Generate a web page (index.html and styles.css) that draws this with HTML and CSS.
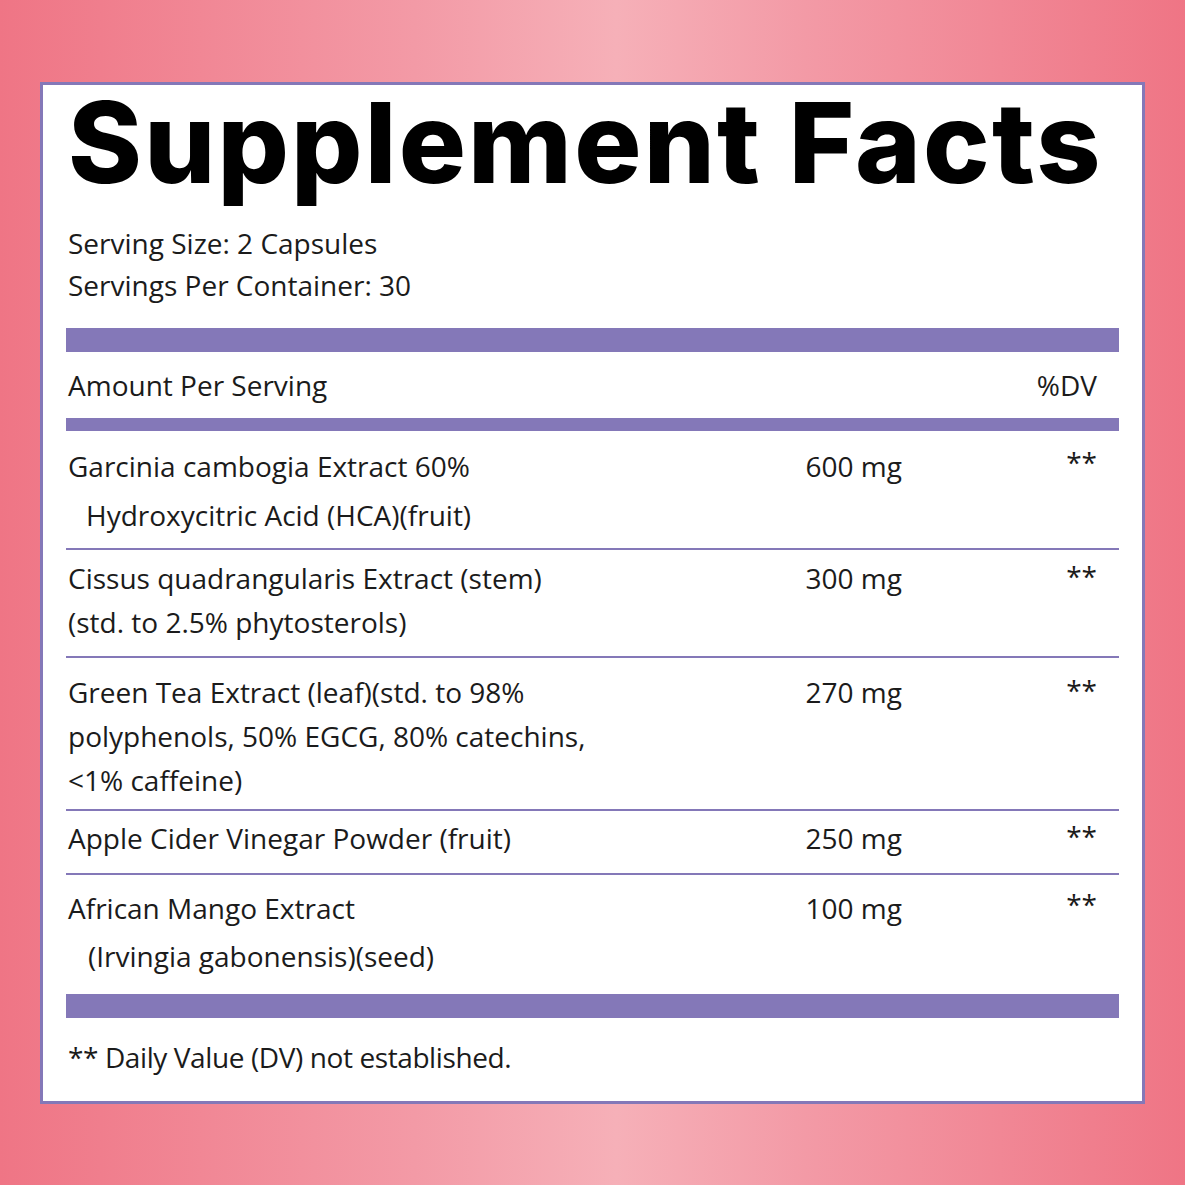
FILE: index.html
```html
<!DOCTYPE html>
<html>
<head>
<meta charset="utf-8">
<link rel="stylesheet" href="styles.css">
</head>
<body>
<div class="card">
  <h1 class="title">Supplement Facts</h1>
  <div class="serving">
    <div>Serving Size: 2 Capsules</div>
    <div>Servings Per Container: 30</div>
  </div>
  <div class="bar thick"></div>
  <div class="head-row">
    <span>Amount Per Serving</span>
    <span>%DV</span>
  </div>
  <div class="bar medium"></div>
  <div class="row r1">
    <div class="name"><div>Garcinia cambogia Extract 60%</div><div class="indent">Hydroxycitric Acid (HCA)(fruit)</div></div>
    <div class="amt">600 mg</div>
    <div class="dv">**</div>
  </div>
  <div class="row r2">
    <div class="name"><div>Cissus quadrangularis Extract (stem)</div><div>(std. to 2.5% phytosterols)</div></div>
    <div class="amt">300 mg</div>
    <div class="dv">**</div>
  </div>
  <div class="row r3">
    <div class="name"><div>Green Tea Extract (leaf)(std. to 98%</div><div>polyphenols, 50% EGCG, 80% catechins,</div><div>&lt;1% caffeine)</div></div>
    <div class="amt">270 mg</div>
    <div class="dv">**</div>
  </div>
  <div class="row r4">
    <div class="name"><div>Apple Cider Vinegar Powder (fruit)</div></div>
    <div class="amt">250 mg</div>
    <div class="dv">**</div>
  </div>
  <div class="row r5 last">
    <div class="name"><div>African Mango Extract</div><div class="indent2">(Irvingia gabonensis)(seed)</div></div>
    <div class="amt">100 mg</div>
    <div class="dv">**</div>
  </div>
  <div class="bar thick"></div>
  <div class="foot">** Daily Value (DV) not established.</div>
</div>
</body>
</html>
```
FILE: styles.css
```css
html, body {
  margin: 0;
  padding: 0;
}
body {
  width: 1185px;
  height: 1185px;
  box-sizing: border-box;
  padding: 82px 40px 0 40px;
  background: linear-gradient(to right, #ef7585 0%, #f39aa6 35%, #f6b0b8 52%, #f39aa6 68%, #ef7585 100%);
  font-family: "Open Sans", "DejaVu Sans", sans-serif;
  color: #1b1b1b;
  overflow: hidden;
}
.card {
  box-sizing: border-box;
  width: 1105px;
  height: 1022px;
  background: #fff;
  border: 3px solid #8478b8;
  padding: 0 23px 0 23px;
}
.title {
  margin: 0;
  padding: 0 0 0 2px;
  font-family: "Inter", "DejaVu Sans", sans-serif;
  font-weight: 800;
  font-size: 112px;
  line-height: 114px;
  letter-spacing: 2.2px;
  color: #000;
  white-space: nowrap;
}
.serving {
  padding: 23px 0 0 2px;
  font-size: 28px;
  line-height: 42px;
}
.bar {
  background: #8478b8;
}
.thick {
  height: 24px;
}
.medium {
  height: 13px;
}
.serving + .bar {
  margin-top: 22px;
}
.head-row {
  display: flex;
  justify-content: space-between;
  height: 66px;
  align-items: center;
  padding: 0 22px 0 2px;
  font-size: 28px;
}
.row {
  display: flex;
  font-size: 28px;
  border-bottom: 2px solid #8478b8;
  box-sizing: border-box;
}
.row.last {
  border-bottom: none;
}
.name {
  flex: 1;
  padding-left: 2px;
}
.amt {
  width: 150px;
  text-align: right;
  margin-right: 145px;
}
.dv {
  width: 50px;
  text-align: right;
  padding-right: 22px;
}
.r1 { height: 119px; padding-top: 11px; line-height: 49px; }
.r2 { height: 108px; padding-top: 6px; line-height: 44px; }
.r3 { height: 153px; padding-top: 12px; line-height: 44px; }
.r4 { height: 64px; padding-top: 5px; line-height: 44px; }
.r5 { height: 119px; padding-top: 9px; line-height: 48px; }
.indent { padding-left: 18px; }
.indent2 { padding-left: 20px; }
.r1 .dv, .r2 .dv, .r3 .dv, .r4 .dv, .r5 .dv { line-height: 40px; }
.foot {
  padding: 19px 0 0 2px;
  font-size: 28px;
  line-height: 40px;
  letter-spacing: -0.4px;
}
```
